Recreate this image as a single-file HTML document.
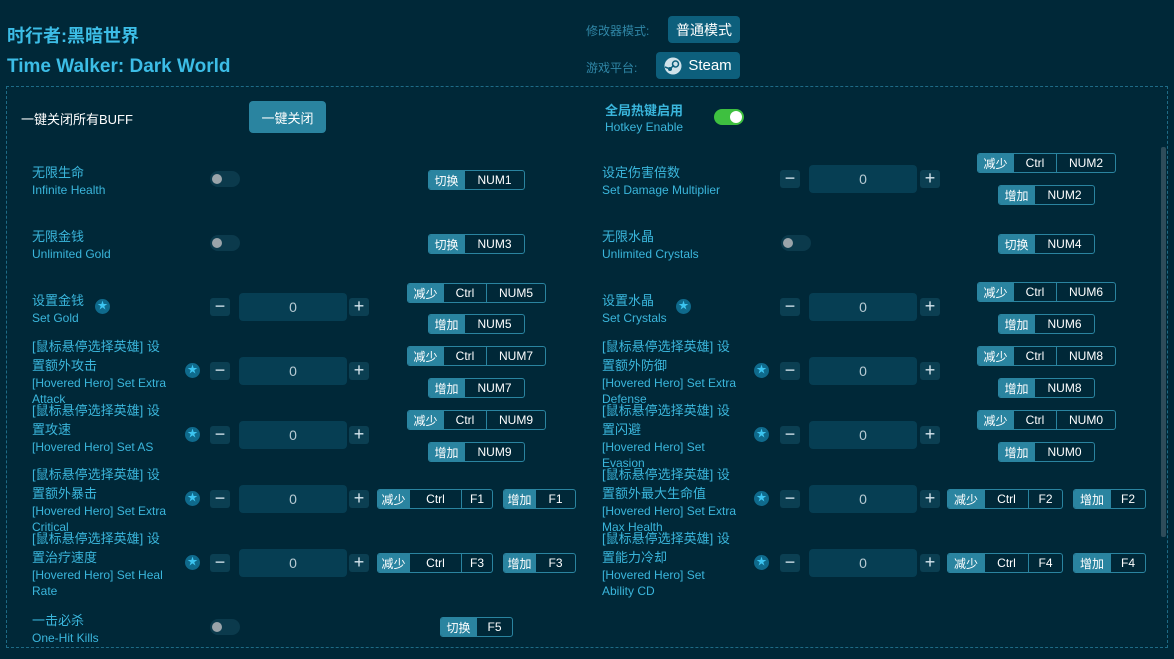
<!DOCTYPE html>
<html><head><meta charset="utf-8"><style>
*{box-sizing:border-box;margin:0;padding:0}
body{width:1174px;height:659px;background:#002838;overflow:hidden;position:relative;font-family:"Liberation Sans","Noto Sans CJK SC",sans-serif;color:#3ab6dc}
.a{position:absolute}
.t1{left:7px;top:22px;font-size:18px;font-weight:bold;color:#3cbde6}
.t2{left:7px;top:56px;font-size:19px;font-weight:bold;color:#3cbde6}
.sm{font-size:12px;color:#2f86a6}
.btn{background:#0d5f7c;color:#fff;border-radius:4px;font-size:14px;display:flex;align-items:center;justify-content:center}
.box{left:6px;top:86px;width:1162px;height:562px;border:1px dashed #1e6b86}
.lab{font-size:13px;line-height:19px;color:#3ab6dc;white-space:nowrap}
.lab .e{font-size:12px;line-height:16px}
.tg{width:30px;height:16px;border-radius:8px;background:#0b3a4c}
.tg:after{content:"";position:absolute;left:2px;top:3px;width:10px;height:10px;border-radius:50%;background:#9aa4aa}
.pm{width:20px;height:18px;background:#0b3f52;border-radius:3px;color:#d6e6ee;font-size:18px;line-height:17px;text-align:center}
.in{width:108px;height:28px;background:#063e53;border-radius:4px;color:#b8cbd4;font-size:14px;line-height:28px;text-align:center}
.st{width:15px;height:15px;border-radius:50%;background:#0f6a8c;color:#3cc4f0;font-size:10px;line-height:15px;text-align:center}
.kg{height:20px;display:flex;border:1px solid #2a84a0;border-radius:3px;font-size:12px;color:#fff;overflow:hidden}
.kg span{display:flex;align-items:center;justify-content:center;border-left:1px solid #2a84a0}
.kg span.l{background:#2a84a0;border-left:0}
</style></head><body>
<div class="a t1">时行者:黑暗世界</div>
<div class="a t2">Time Walker: Dark World</div>
<div class="a sm" style="left:586px;top:22px">修改器模式:</div>
<div class="a btn" style="left:668px;top:16px;width:72px;height:27px">普通模式</div>
<div class="a sm" style="left:586px;top:59px">游戏平台:</div>
<div class="a btn" style="left:656px;top:52px;width:84px;height:27px;font-size:15px"><svg width="18" height="18" viewBox="0 0 18 18" style="margin-right:6px"><circle cx="9" cy="9" r="8.5" fill="#cfe2ea"/><circle cx="11.5" cy="7" r="3" fill="none" stroke="#0d5f7c" stroke-width="1.5"/><circle cx="6" cy="12" r="2" fill="#0d5f7c"/><path d="M1 10 L6 12 L10 8" stroke="#0d5f7c" stroke-width="1.5" fill="none"/></svg>Steam</div>
<div class="a box"></div>
<div class="a" style="left:1161px;top:147px;width:5px;height:390px;background:#2e4c5a;border-radius:2px"></div>
<div class="a" style="left:21px;top:109px;font-size:13px;color:#fff">一键关闭所有BUFF</div>
<div class="a btn" style="left:249px;top:101px;width:77px;height:32px;background:#2a84a0;font-size:13px">一键关闭</div>
<div class="a" style="left:605px;top:102px;font-size:13px;font-weight:bold;line-height:17px">全局热键启用<div style="font-size:12px;font-weight:normal">Hotkey Enable</div></div>
<div class="a" style="left:714px;top:109px;width:30px;height:16px;border-radius:8px;background:#3ec040"><div class="a" style="left:16px;top:2px;width:12px;height:12px;border-radius:50%;background:#fff"></div></div>

<!-- left column -->
<div class="a lab" style="left:32px;top:163px">无限生命<div class="e">Infinite Health</div></div>
<div class="a tg" style="left:210px;top:171px"></div>
<div class="a kg" style="left:428px;top:170px;width:97px"><span class="l" style="width:35px">切换</span><span style="flex:1">NUM1</span></div>

<div class="a lab" style="left:32px;top:227px">无限金钱<div class="e">Unlimited Gold</div></div>
<div class="a tg" style="left:210px;top:235px"></div>
<div class="a kg" style="left:428px;top:234px;width:97px"><span class="l" style="width:35px">切换</span><span style="flex:1">NUM3</span></div>

<div class="a lab" style="left:32px;top:291px">设置金钱<div class="e">Set Gold</div></div>
<div class="a st" style="left:95px;top:299px">★</div>
<div class="a pm" style="left:210px;top:298px">−</div><div class="a in" style="left:239px;top:293px">0</div><div class="a pm" style="left:349px;top:298px">+</div>
<div class="a kg" style="left:407px;top:283px;width:139px"><span class="l" style="width:35px">减少</span><span style="width:43px">Ctrl</span><span style="flex:1">NUM5</span></div>
<div class="a kg" style="left:428px;top:314px;width:97px"><span class="l" style="width:35px">增加</span><span style="flex:1">NUM5</span></div>

<div class="a lab" style="left:32px;top:337px">[鼠标悬停选择英雄] 设<br>置额外攻击<div class="e">[Hovered Hero] Set Extra<br>Attack</div></div>
<div class="a st" style="left:185px;top:363px">★</div>
<div class="a pm" style="left:210px;top:362px">−</div><div class="a in" style="left:239px;top:357px">0</div><div class="a pm" style="left:349px;top:362px">+</div>
<div class="a kg" style="left:407px;top:346px;width:139px"><span class="l" style="width:35px">减少</span><span style="width:43px">Ctrl</span><span style="flex:1">NUM7</span></div>
<div class="a kg" style="left:428px;top:378px;width:97px"><span class="l" style="width:35px">增加</span><span style="flex:1">NUM7</span></div>

<div class="a lab" style="left:32px;top:401px">[鼠标悬停选择英雄] 设<br>置攻速<div class="e">[Hovered Hero] Set AS</div></div>
<div class="a st" style="left:185px;top:427px">★</div>
<div class="a pm" style="left:210px;top:426px">−</div><div class="a in" style="left:239px;top:421px">0</div><div class="a pm" style="left:349px;top:426px">+</div>
<div class="a kg" style="left:407px;top:410px;width:139px"><span class="l" style="width:35px">减少</span><span style="width:43px">Ctrl</span><span style="flex:1">NUM9</span></div>
<div class="a kg" style="left:428px;top:442px;width:97px"><span class="l" style="width:35px">增加</span><span style="flex:1">NUM9</span></div>

<div class="a lab" style="left:32px;top:465px">[鼠标悬停选择英雄] 设<br>置额外暴击<div class="e">[Hovered Hero] Set Extra<br>Critical</div></div>
<div class="a st" style="left:185px;top:491px">★</div>
<div class="a pm" style="left:210px;top:490px">−</div><div class="a in" style="left:239px;top:485px">0</div><div class="a pm" style="left:349px;top:490px">+</div>
<div class="a kg" style="left:377px;top:489px;width:116px"><span class="l" style="width:31px">减少</span><span style="width:52px">Ctrl</span><span style="flex:1">F1</span></div>
<div class="a kg" style="left:503px;top:489px;width:73px"><span class="l" style="width:31px">增加</span><span style="flex:1">F1</span></div>

<div class="a lab" style="left:32px;top:529px">[鼠标悬停选择英雄] 设<br>置治疗速度<div class="e">[Hovered Hero] Set Heal<br>Rate</div></div>
<div class="a st" style="left:185px;top:555px">★</div>
<div class="a pm" style="left:210px;top:554px">−</div><div class="a in" style="left:239px;top:549px">0</div><div class="a pm" style="left:349px;top:554px">+</div>
<div class="a kg" style="left:377px;top:553px;width:116px"><span class="l" style="width:31px">减少</span><span style="width:52px">Ctrl</span><span style="flex:1">F3</span></div>
<div class="a kg" style="left:503px;top:553px;width:73px"><span class="l" style="width:31px">增加</span><span style="flex:1">F3</span></div>

<div class="a lab" style="left:32px;top:611px">一击必杀<div class="e">One-Hit Kills</div></div>
<div class="a tg" style="left:210px;top:619px"></div>
<div class="a kg" style="left:440px;top:617px;width:73px"><span class="l" style="width:35px">切换</span><span style="flex:1">F5</span></div>

<!-- right column -->
<div class="a lab" style="left:602px;top:163px">设定伤害倍数<div class="e">Set Damage Multiplier</div></div>
<div class="a pm" style="left:780px;top:170px">−</div><div class="a in" style="left:809px;top:165px">0</div><div class="a pm" style="left:920px;top:170px">+</div>
<div class="a kg" style="left:977px;top:153px;width:139px"><span class="l" style="width:35px">减少</span><span style="width:43px">Ctrl</span><span style="flex:1">NUM2</span></div>
<div class="a kg" style="left:998px;top:185px;width:97px"><span class="l" style="width:35px">增加</span><span style="flex:1">NUM2</span></div>

<div class="a lab" style="left:602px;top:227px">无限水晶<div class="e">Unlimited Crystals</div></div>
<div class="a tg" style="left:781px;top:235px"></div>
<div class="a kg" style="left:998px;top:234px;width:97px"><span class="l" style="width:35px">切换</span><span style="flex:1">NUM4</span></div>

<div class="a lab" style="left:602px;top:291px">设置水晶<div class="e">Set Crystals</div></div>
<div class="a st" style="left:676px;top:299px">★</div>
<div class="a pm" style="left:780px;top:298px">−</div><div class="a in" style="left:809px;top:293px">0</div><div class="a pm" style="left:920px;top:298px">+</div>
<div class="a kg" style="left:977px;top:282px;width:139px"><span class="l" style="width:35px">减少</span><span style="width:43px">Ctrl</span><span style="flex:1">NUM6</span></div>
<div class="a kg" style="left:998px;top:314px;width:97px"><span class="l" style="width:35px">增加</span><span style="flex:1">NUM6</span></div>

<div class="a lab" style="left:602px;top:337px">[鼠标悬停选择英雄] 设<br>置额外防御<div class="e">[Hovered Hero] Set Extra<br>Defense</div></div>
<div class="a st" style="left:754px;top:363px">★</div>
<div class="a pm" style="left:780px;top:362px">−</div><div class="a in" style="left:809px;top:357px">0</div><div class="a pm" style="left:920px;top:362px">+</div>
<div class="a kg" style="left:977px;top:346px;width:139px"><span class="l" style="width:35px">减少</span><span style="width:43px">Ctrl</span><span style="flex:1">NUM8</span></div>
<div class="a kg" style="left:998px;top:378px;width:97px"><span class="l" style="width:35px">增加</span><span style="flex:1">NUM8</span></div>

<div class="a lab" style="left:602px;top:401px">[鼠标悬停选择英雄] 设<br>置闪避<div class="e">[Hovered Hero] Set<br>Evasion</div></div>
<div class="a st" style="left:754px;top:427px">★</div>
<div class="a pm" style="left:780px;top:426px">−</div><div class="a in" style="left:809px;top:421px">0</div><div class="a pm" style="left:920px;top:426px">+</div>
<div class="a kg" style="left:977px;top:410px;width:139px"><span class="l" style="width:35px">减少</span><span style="width:43px">Ctrl</span><span style="flex:1">NUM0</span></div>
<div class="a kg" style="left:998px;top:442px;width:97px"><span class="l" style="width:35px">增加</span><span style="flex:1">NUM0</span></div>

<div class="a lab" style="left:602px;top:465px">[鼠标悬停选择英雄] 设<br>置额外最大生命值<div class="e">[Hovered Hero] Set Extra<br>Max Health</div></div>
<div class="a st" style="left:754px;top:491px">★</div>
<div class="a pm" style="left:780px;top:490px">−</div><div class="a in" style="left:809px;top:485px">0</div><div class="a pm" style="left:920px;top:490px">+</div>
<div class="a kg" style="left:947px;top:489px;width:116px"><span class="l" style="width:36px">减少</span><span style="width:44px">Ctrl</span><span style="flex:1">F2</span></div>
<div class="a kg" style="left:1073px;top:489px;width:73px"><span class="l" style="width:36px">增加</span><span style="flex:1">F2</span></div>

<div class="a lab" style="left:602px;top:529px">[鼠标悬停选择英雄] 设<br>置能力冷却<div class="e">[Hovered Hero] Set<br>Ability CD</div></div>
<div class="a st" style="left:754px;top:555px">★</div>
<div class="a pm" style="left:780px;top:554px">−</div><div class="a in" style="left:809px;top:549px">0</div><div class="a pm" style="left:920px;top:554px">+</div>
<div class="a kg" style="left:947px;top:553px;width:116px"><span class="l" style="width:36px">减少</span><span style="width:44px">Ctrl</span><span style="flex:1">F4</span></div>
<div class="a kg" style="left:1073px;top:553px;width:73px"><span class="l" style="width:36px">增加</span><span style="flex:1">F4</span></div>
</body></html>
